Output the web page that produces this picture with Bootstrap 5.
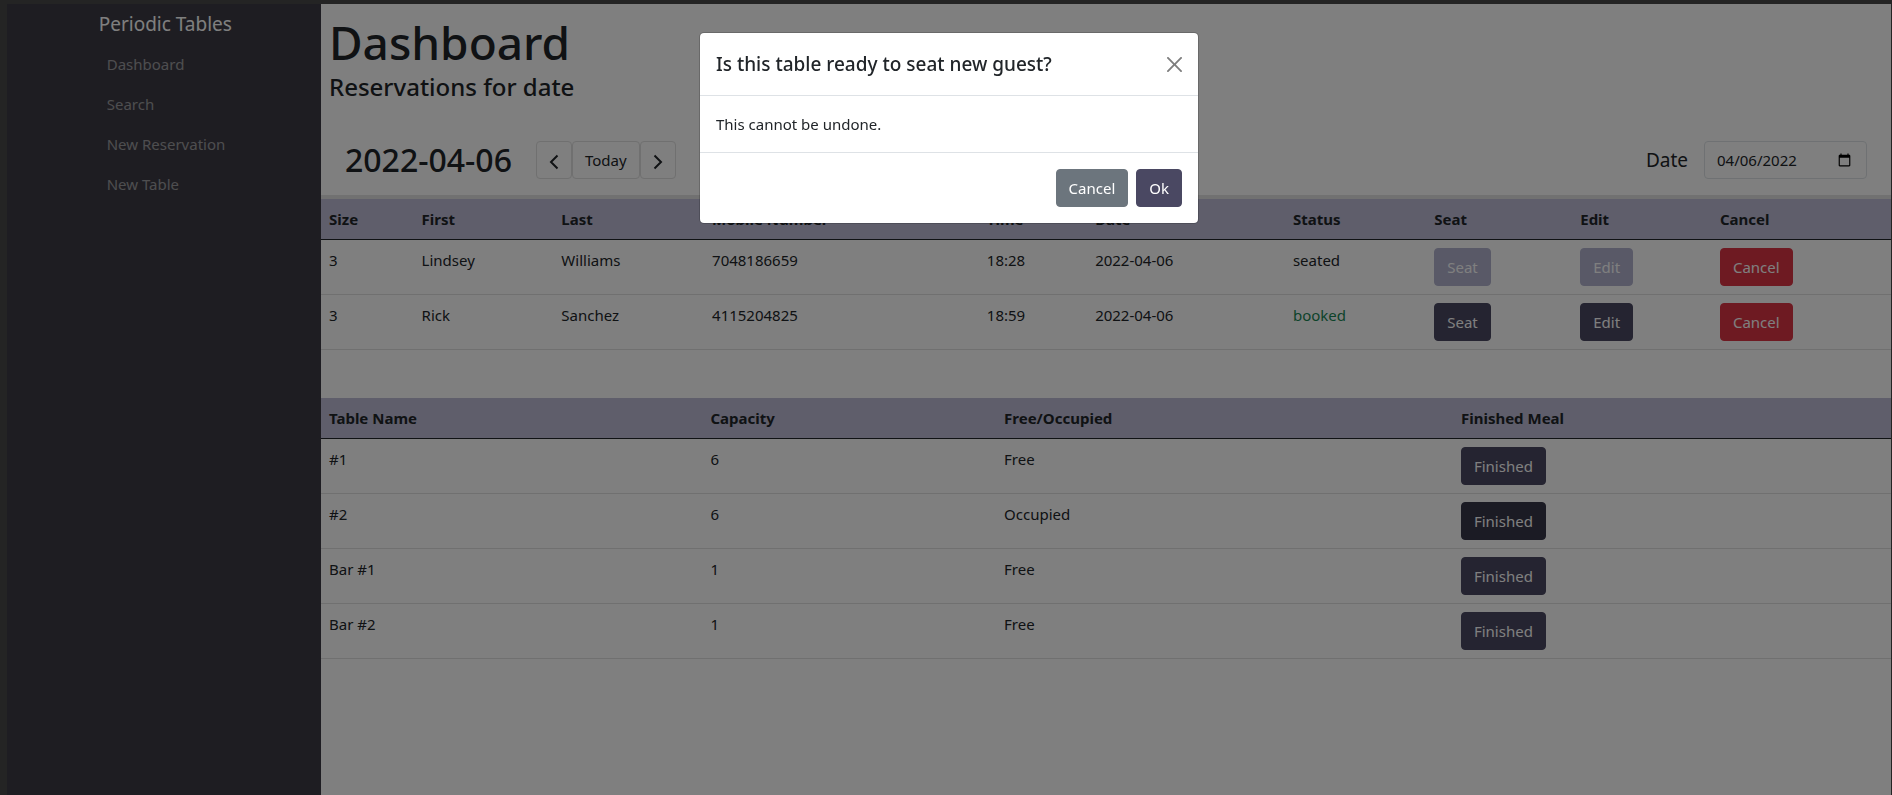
<!DOCTYPE html>
<html lang="en">
<head>
<meta charset="utf-8">
<meta name="viewport" content="width=device-width, initial-scale=1">
<title>Periodic Tables</title>
<link href="https://cdn.jsdelivr.net/npm/bootstrap@5.3.0/dist/css/bootstrap.min.css" rel="stylesheet">
<style>
  body {
    font-family: "Noto Sans", "Open Sans", sans-serif;
    font-size: 15px;
    line-height: 24px;
    color: #212529;
    overflow: hidden;
  }
  .app-frame {
    border: solid #484848;
    border-width: 4px 1px 0 7px;
    min-height: 100vh;
  }
  .app-side { background: #3c3b44; }
  .app-side .navbar-brand { font-size: 19px; line-height: 32px; margin: 0; color: #fff; }
  .app-side .nav-link { color: rgba(255, 255, 255, .5); }
  .page-title { font-size: 46px; line-height: 60px; }
  .page-subtitle { font-size: 24px; line-height: 29px; }
  .date-title { font-size: 32px; line-height: 38px; }
  .date-bar { border-bottom: 4px solid #e2e2e2; }
  .date-label { font-size: 19px; }
  .date-field { width: 163px; }
  .btn, .form-control { font-size: 15px; line-height: 24px; border-radius: 4px; color: #212529; }
  .btn-outline { border-color: #e0e0e0; }
  .btn-step { padding-inline: 9px; }
  .btn-indigo { --bs-btn-disabled-opacity: 1; background: #4a4862; border-color: #4a4862; color: #fff; }
  .btn-indigo:disabled { background: #b2b3cf; border-color: #b2b3cf; color: #fff; }
  .btn-indigo.is-occupied { background: #363649; border-color: #363649; }
  .btn-danger, .btn-secondary { color: #fff; }
  .list-table { table-layout: fixed; margin-bottom: 48px; color: #212529; }
  .list-table thead th { background: #bebdd7; border-bottom-color: #212529; }
  .list-table td { border-bottom-color: #e0e0e0; }
  .modal { --bs-modal-border-radius: 5px; --bs-modal-inner-border-radius: 4px; inset: 4px 1px auto 7px; width: auto; height: auto; }
  .modal-title { font-size: 19px; line-height: 30px; }
</style>
</head>
<body>
<div class="app-frame d-flex">
  <div class="row g-0 flex-grow-1">
    <nav class="app-side col-2 d-flex justify-content-center" aria-label="Main">
      <div class="ps-1 pt-1">
        <a class="navbar-brand d-block" href="#">Periodic Tables</a>
        <ul class="nav flex-column pt-1">
          <li><a class="nav-link p-2" href="#">Dashboard</a></li>
          <li><a class="nav-link p-2" href="#">Search</a></li>
          <li><a class="nav-link p-2" href="#">New Reservation</a></li>
          <li><a class="nav-link p-2" href="#">New Table</a></li>
        </ul>
      </div>
    </nav>
    <main class="col-10">
      <header class="px-2 pt-2 pb-2">
        <h1 class="page-title mb-0">Dashboard</h1>
        <h4 class="page-subtitle mb-0">Reservations for date</h4>
      </header>
      <div class="date-bar d-flex justify-content-between align-items-center px-4 pt-4 pb-3 mt-2">
        <div class="d-flex align-items-center">
          <h2 class="date-title mb-0 me-4">2022-04-06</h2>
          <button type="button" class="btn btn-outline btn-step" aria-label="Previous day">
            <svg width="16" height="16" viewBox="0 0 16 16" fill="none" stroke="currentColor" stroke-width="2" aria-hidden="true"><path d="M11.500 1.500L5 8l6.500 6.500"/></svg>
          </button>
          <button type="button" class="btn btn-outline">Today</button>
          <button type="button" class="btn btn-outline btn-step" aria-label="Next day">
            <svg width="16" height="16" viewBox="0 0 16 16" fill="none" stroke="currentColor" stroke-width="2" aria-hidden="true"><path d="M4.500 1.500L11 8l-6.500 6.500"/></svg>
          </button>
        </div>
        <div class="d-flex align-items-center gap-3">
          <label class="date-label" for="date">Date</label>
          <input class="form-control date-field" type="date" id="date" value="2022-04-06">
        </div>
      </div>

      <table class="table list-table">
        <colgroup>
          <col style="width:5.9%"><col style="width:8.9%"><col style="width:9.6%"><col style="width:17.5%"><col style="width:6.9%">
          <col style="width:12.6%"><col style="width:9%"><col style="width:9.3%"><col style="width:8.9%"><col>
        </colgroup>
        <thead>
          <tr><th>Size</th><th>First</th><th>Last</th><th>Mobile Number</th><th>Time</th><th>Date</th><th>Status</th><th>Seat</th><th>Edit</th><th>Cancel</th></tr>
        </thead>
        <tbody>
          <tr>
            <td>3</td><td>Lindsey</td><td>Williams</td><td>7048186659</td><td>18:28</td><td>2022-04-06</td><td>seated</td>
            <td><button type="button" class="btn btn-indigo" disabled>Seat</button></td>
            <td><button type="button" class="btn btn-indigo" disabled>Edit</button></td>
            <td><button type="button" class="btn btn-danger">Cancel</button></td>
          </tr>
          <tr>
            <td>3</td><td>Rick</td><td>Sanchez</td><td>4115204825</td><td>18:59</td><td>2022-04-06</td><td class="text-success">booked</td>
            <td><button type="button" class="btn btn-indigo">Seat</button></td>
            <td><button type="button" class="btn btn-indigo">Edit</button></td>
            <td><button type="button" class="btn btn-danger">Cancel</button></td>
          </tr>
        </tbody>
      </table>

      <table class="table list-table">
        <colgroup>
          <col style="width:24.3%"><col style="width:18.7%"><col style="width:29.1%"><col>
        </colgroup>
        <thead>
          <tr><th>Table Name</th><th>Capacity</th><th>Free/Occupied</th><th>Finished Meal</th></tr>
        </thead>
        <tbody>
          <tr><td>#1</td><td>6</td><td>Free</td><td><button type="button" class="btn btn-indigo">Finished</button></td></tr>
          <tr><td>#2</td><td>6</td><td>Occupied</td><td><button type="button" class="btn btn-indigo is-occupied">Finished</button></td></tr>
          <tr><td>Bar #1</td><td>1</td><td>Free</td><td><button type="button" class="btn btn-indigo">Finished</button></td></tr>
          <tr><td>Bar #2</td><td>1</td><td>Free</td><td><button type="button" class="btn btn-indigo">Finished</button></td></tr>
        </tbody>
      </table>
    </main>
  </div>
</div>

<div class="modal-backdrop show"></div>
<div class="modal show d-block" role="dialog" aria-modal="true" aria-labelledby="finish-title">
  <div class="modal-dialog">
    <div class="modal-content">
      <div class="modal-header">
        <h5 class="modal-title" id="finish-title">Is this table ready to seat new guest?</h5>
        <button type="button" class="btn-close" data-bs-dismiss="modal" aria-label="Close"></button>
      </div>
      <div class="modal-body">This cannot be undone.</div>
      <div class="modal-footer">
        <button type="button" class="btn btn-secondary" data-bs-dismiss="modal">Cancel</button>
        <button type="button" class="btn btn-indigo">Ok</button>
      </div>
    </div>
  </div>
</div>
<script src="https://cdn.jsdelivr.net/npm/bootstrap@5.3.0/dist/js/bootstrap.bundle.min.js"></script>
</body>
</html>
